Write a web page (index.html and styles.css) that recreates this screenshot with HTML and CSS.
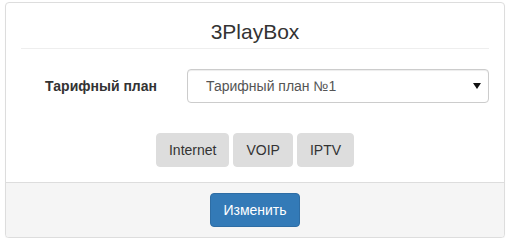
FILE: index.html
```html
<!DOCTYPE html>
<html lang="ru">
<head>
<meta charset="utf-8">
<title>3PlayBox</title>
<link rel="stylesheet" href="styles.css">
</head>
<body>
<div class="panel">
  <div class="panel-body">
    <h3 class="title">3PlayBox</h3>
    <hr class="divider">
    <div class="form-row">
      <label class="form-label" for="plan">Тарифный план</label>
      <div class="select-wrap">
        <select id="plan" class="form-select">
          <option>Тарифный план №1</option>
        </select>
        <svg class="select-arrow" width="8" height="6" viewBox="0 0 8 6"><path d="M0 0H8L4 6Z" fill="#111"/></svg>
      </div>
    </div>
    <div class="services">
      <button class="btn btn-service">Internet</button>
      <button class="btn btn-service">VOIP</button>
      <button class="btn btn-service">IPTV</button>
    </div>
  </div>
  <div class="panel-footer">
    <button class="btn btn-primary">Изменить</button>
  </div>
</div>
</body>
</html>
```
FILE: styles.css
```css
* { box-sizing: border-box; }
html, body { margin: 0; padding: 0; background: #fff; }
body {
  padding: 2px 5px 0 5px;
  font-family: "Liberation Sans", Arial, sans-serif;
  font-size: 14px;
  color: #333;
}
.panel {
  width: 500px;
  border: 1px solid #ddd;
  border-radius: 4px;
  background: #fff;
  box-shadow: 0 1px 1px rgba(0,0,0,.05);
}
.panel-body {
  padding: 15px;
}
.title {
  margin: 0;
  font-size: 21px;
  font-weight: normal;
  line-height: 28px;
  text-align: center;
  color: #333;
}
.divider {
  margin: 2px 0 20px;
  border: 0;
  border-top: 1px solid #eee;
  height: 0;
}
.form-row {
  display: grid;
  grid-template-columns: 151px 1fr;
  column-gap: 15px;
  align-items: center;
  margin: 0 0 30px;
}
.form-label {
  text-align: right;
  padding-right: 15px;
  font-weight: bold;
  font-size: 14px;
  color: #333;
}
.select-wrap {
  position: relative;
}
.form-select {
  display: block;
  width: 100%;
  height: 34px;
  padding: 0 28px 0 18px;
  font-family: inherit;
  font-size: 14px;
  color: #555;
  background: #fff;
  border: 1px solid #ccc;
  border-radius: 4px;
  box-shadow: inset 0 1px 1px rgba(0,0,0,.075);
  appearance: none;
  -webkit-appearance: none;
}
.select-arrow {
  position: absolute;
  right: 8px;
  top: 14px;
  pointer-events: none;
}
.services {
  display: flex;
  justify-content: center;
  gap: 4px;
}
.btn {
  display: inline-block;
  height: 34px;
  padding: 0 12px;
  font-family: inherit;
  font-size: 14px;
  line-height: 32px;
  border-radius: 4px;
  border: 1px solid transparent;
  cursor: pointer;
}
.btn-service {
  background: #ddd;
  border-color: #ddd;
  color: #333;
}
.panel-footer {
  display: flex;
  justify-content: center;
  padding: 10px 15px;
  background: #f5f5f5;
  border-top: 1px solid #ddd;
  border-radius: 0 0 3px 3px;
}
.btn-primary {
  background: #337ab7;
  border-color: #2e6da4;
  color: #fff;
}
```
